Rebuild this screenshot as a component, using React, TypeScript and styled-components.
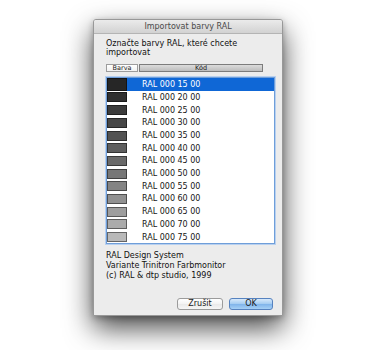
import styled, { createGlobalStyle } from "styled-components";

const GlobalStyle = createGlobalStyle`
  html, body {
    margin: 0;
    padding: 0;
    background: #ffffff;
  }
  body {
    font-family: "DejaVu Sans", "Liberation Sans", sans-serif;
  }
`;

const Page = styled.div`
  width: 380px;
  height: 350px;
  padding: 19px 0 0 93px;
  box-sizing: border-box;
  overflow: hidden;
`;

const Window = styled.div`
  width: 190px;
  height: 297px;
  box-sizing: border-box;
  background: #ececec;
  border: 1px solid #989898;
  border-radius: 3px 3px 0 0;
  box-shadow: 0 12px 28px rgba(0, 0, 0, 0.72), 0 2px 6px rgba(0, 0, 0, 0.25);
  display: flex;
  flex-direction: column;
`;

const TitleBar = styled.div`
  height: 13px;
  line-height: 13px;
  border-bottom: 1px solid #b4b4b4;
  background: linear-gradient(#ebebeb, #d2d2d2);
  border-radius: 2px 2px 0 0;
  text-align: center;
  font-size: 8px;
  color: #4a4a4a;
`;

const Body = styled.div`
  flex: 1;
  display: flex;
  flex-direction: column;
  padding: 0 7px 5px 12px;
`;

const Message = styled.div`
  margin-top: 5px;
  font-size: 8px;
  line-height: 9.2px;
  color: #111;
`;

const Headers = styled.div`
  margin-top: 7px;
  display: flex;
  gap: 1px;
  width: 157px;
  height: 8px;
`;

const HeaderCell = styled.div<{ $active?: boolean; $w?: number }>`
  box-sizing: border-box;
  height: 8px;
  ${(p) => (p.$w ? `width: ${p.$w}px;` : "flex: 1;")}
  border: 1px solid ${(p) => (p.$active ? "#7c7c7c" : "#9c9c9c")};
  background: ${(p) =>
    p.$active ? "linear-gradient(#dcdcdc, #bdbdbd)" : "linear-gradient(#ffffff, #f1f1f1)"};
  font-size: 6.5px;
  line-height: 6px;
  text-align: center;
  color: #222;
`;

const List = styled.div`
  margin-top: 5px;
  width: 169px;
  height: 167px;
  box-sizing: border-box;
  border: 1px solid #6f9ed9;
  box-shadow: 0 0 0 1px #b8d0ef;
  background: #ffffff;
  overflow: hidden;
`;

const Row = styled.div<{ $selected?: boolean }>`
  height: 12.7px;
  display: flex;
  align-items: center;
  background: ${(p) => (p.$selected ? "#0f67d6" : "transparent")};
  color: ${(p) => (p.$selected ? "#ffffff" : "#161616")};
  font-size: 8px;
`;

const SwatchCell = styled.div`
  width: 32px;
  height: 100%;
  display: flex;
  align-items: center;
`;

const Swatch = styled.div<{ $c: string; $tall?: boolean }>`
  width: 20px;
  height: ${(p) => (p.$tall ? "100%" : "10px")};
  box-sizing: border-box;
  border: 1px solid rgba(0, 0, 0, 0.45);
  background: ${(p) => p.$c};
`;

const Code = styled.span`
  padding-left: 3px;
`;

const Info = styled.div`
  margin-top: 7px;
  font-size: 8px;
  line-height: 9.6px;
  color: #111;
`;

const Buttons = styled.div`
  margin-top: auto;
  display: flex;
  justify-content: flex-end;
  gap: 6px;
  padding-right: 2px;
`;

const Button = styled.button<{ $primary?: boolean }>`
  width: ${(p) => (p.$primary ? 44 : 46)}px;
  height: 12px;
  padding: 0;
  box-sizing: border-box;
  border-radius: 3px;
  font-family: inherit;
  font-size: 8px;
  line-height: 10px;
  color: #1a1a1a;
  border: 1px solid ${(p) => (p.$primary ? "#5682bf" : "#9b9b9b")};
  background: ${(p) =>
    p.$primary
      ? "linear-gradient(#d7e9fb, #a3cbf1 50%, #7fb3ea 51%, #a6d0f6)"
      : "linear-gradient(#ffffff, #f3f3f3 50%, #e9e9e9 51%, #f6f6f6)"};
`;

// RAL 000 L 00 -> grey from lightness
const grey = (l: number) => {
  const y = l > 8 ? Math.pow((l + 16) / 116, 3) : l / 903.3;
  const s = y <= 0.0031308 ? 12.92 * y : 1.055 * Math.pow(y, 1 / 2.4) - 0.055;
  const v = Math.round(s * 255);
  return `rgb(${v},${v},${v})`;
};

const levels = [15, 20, 25, 30, 35, 40, 45, 50, 55, 60, 65, 70, 75];

export default function App() {
  return (
    <>
      <GlobalStyle />
      <Page>
        <Window>
          <TitleBar>Importovat barvy RAL</TitleBar>
          <Body>
            <Message>
              Označte barvy RAL, které chcete
              <br />
              importovat
            </Message>
            <Headers>
              <HeaderCell $w={32}>Barva</HeaderCell>
              <HeaderCell $active>Kód</HeaderCell>
            </Headers>
            <List>
              {levels.map((l, i) => (
                <Row key={l} $selected={i === 0}>
                  <SwatchCell>
                    <Swatch $c={grey(l)} $tall={i === 0} />
                  </SwatchCell>
                  <Code>RAL 000 {l} 00</Code>
                </Row>
              ))}
            </List>
            <Info>
              RAL Design System
              <br />
              Variante Trinitron Farbmonitor
              <br />
              (c) RAL &amp; dtp studio, 1999
            </Info>
            <Buttons>
              <Button>Zrušit</Button>
              <Button $primary>OK</Button>
            </Buttons>
          </Body>
        </Window>
      </Page>
    </>
  );
}
